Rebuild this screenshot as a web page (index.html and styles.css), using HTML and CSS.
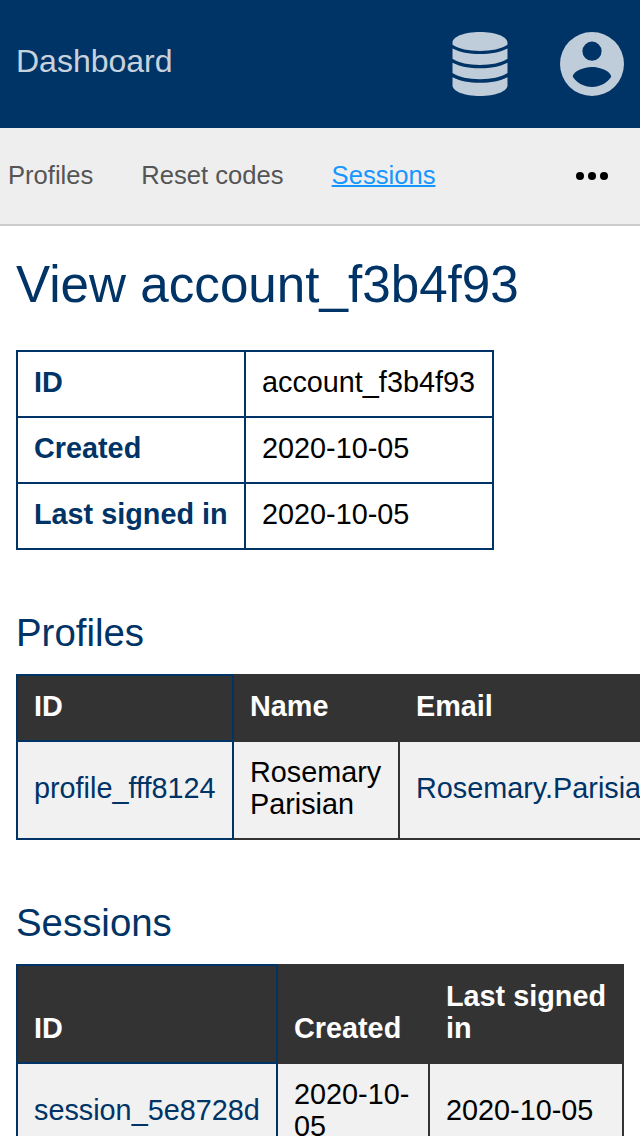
FILE: index.html
```
<!DOCTYPE html>
<html lang="en">
<head>
<meta charset="utf-8">
<title>Dashboard</title>
<link rel="stylesheet" href="styles.css">
</head>
<body>
<header class="topbar">
  <a class="brand">Dashboard</a>
  <div class="actions">
    <svg class="db-icon" viewBox="0 0 56 64"><path d="M28 0C43.5 0 55.5 4.8 55.5 10.5V12.8C49 17 39.500 19 28 19S7 17 .5 12.800V10.500C.5 4.800 12.500 0 28 0ZM.5 16.400C8 20.300 17 21.900 28 21.900S48 20.300 55.500 16.400V26.800C49 31 39.500 33 28 33S7 31 .5 26.800ZM.5 30.800C8 34.700 17 36.300 28 36.300S48 34.700 55.500 30.800V41.100C49 45.300 39.500 47.300 28 47.300S7 45.300 .5 41.100ZM.5 45.200C8 49.100 17 50.700 28 50.700S48 49.100 55.500 45.200V53.500C55.500 59.200 43.500 64 28 64S.5 59.200 .5 53.500Z"/></svg>
    <svg class="user-icon" viewBox="2 2 20 20"><path fill-rule="evenodd" d="M12 2A10 10 0 0 0 2 12A10 10 0 0 0 12 22A10 10 0 0 0 22 12A10 10 0 0 0 12 2ZM12 5A3 3 0 0 1 15 8A3 3 0 0 1 12 11A3 3 0 0 1 9 8A3 3 0 0 1 12 5ZM12 19.2C9.5 19.2 7.29 17.92 6 16C6.03 14 10 12.9 12 12.9C14 12.9 17.97 14 18 16C16.71 17.92 14.5 19.2 12 19.2Z"/></svg>
  </div>
</header>
<nav class="subnav">
  <a>Profiles</a>
  <a>Reset codes</a>
  <a class="active">Sessions</a>
  <svg class="more" viewBox="0 0 32 8"><circle cx="4" cy="4" r="4"/><circle cx="16" cy="4" r="4"/><circle cx="28" cy="4" r="4"/></svg>
</nav>
<main class="content">
  <h1>View account_f3b4f93</h1>
  <table class="details">
    <colgroup><col class="details-key"><col class="details-value"></colgroup>
    <tr><th>ID</th><td>account_f3b4f93</td></tr>
    <tr><th>Created</th><td>2020-10-05</td></tr>
    <tr><th>Last signed in</th><td>2020-10-05</td></tr>
  </table>
  <h2>Profiles</h2>
  <table class="list profiles">
    <colgroup><col class="profile-id"><col class="profile-name"><col class="profile-email"></colgroup>
    <thead><tr><th>ID</th><th>Name</th><th>Email</th></tr></thead>
    <tbody><tr><td><a>profile_fff8124</a></td><td>Rosemary Parisian</td><td><a>Rosemary.Parisian</a></td></tr></tbody>
  </table>
  <h2>Sessions</h2>
  <table class="list sessions">
    <colgroup><col class="session-id"><col class="session-created"><col class="session-last"></colgroup>
    <thead><tr><th>ID</th><th>Created</th><th>Last signed in</th></tr></thead>
    <tbody><tr><td><a>session_5e8728d</a></td><td>2020-10-<wbr>05</td><td>2020-10-05</td></tr></tbody>
  </table>
</main>
</body>
</html>
```
FILE: styles.css
```
* { box-sizing: border-box; }
body {
  margin: 0;
  height: 1136px;
  overflow: hidden;
  background: #fff;
  color: #000;
  font: 28.8px/32px "Liberation Sans", Arial, sans-serif;
}
.topbar {
  display: flex;
  justify-content: space-between;
  align-items: center;
  height: 128px;
  padding: 0 16px;
  background: #003366;
}
.brand {
  color: rgba(255, 255, 255, .8);
  font-size: 32px;
  line-height: 36px;
  padding-bottom: 6px;
}
.actions { display: flex; gap: 52px; fill: #bfccd9; }
.db-icon { width: 56px; height: 64px; }
.user-icon { width: 64px; height: 64px; }
.subnav {
  display: flex;
  align-items: center;
  gap: 48px;
  height: 98px;
  padding: 0 32px 0 8px;
  border-bottom: 2px solid #ccc;
  background: #eee;
  color: #555;
  font-size: 25.6px;
}
.subnav a { padding-bottom: 2px; }
.subnav .active { color: #1597ff; text-decoration: underline; text-decoration-thickness: 2px; }
.more { width: 32px; height: 8px; margin-left: auto; fill: #000; }
.content { padding: 0 16px; }
h1, h2 { margin: 0; color: #003366; font-weight: 400; }
h1 { font-size: 51.2px; line-height: 60px; padding: 29px 0 35px; }
h2 { font-size: 38.4px; line-height: 44px; padding: 61px 0 19px; }
table { border-collapse: collapse; table-layout: fixed; }
th, td { padding: 14px 16px 18px; text-align: left; border: 2px solid #333; }
th { vertical-align: bottom; }
td { vertical-align: middle; }
.details { width: 478px; }
.details th, .details td { border-color: #003366; padding-right: 15px; white-space: nowrap; }
.details th { color: #003366; }
.details-key { width: 228px; }
.details-value { width: 248px; }
.list thead th { background: #333; color: #fff; }
.list td { background: #f1f1f1; }
.list a { color: #003366; }
.list th:first-child, .list td:first-child { border-color: #003366; }
.profiles { width: 704px; }
.profile-id { width: 216px; }
.profile-name { width: 166px; }
.profile-email { width: 320px; }
.sessions { width: 608px; }
.session-id { width: 260px; }
.session-created { width: 152px; }
.session-last { width: 194px; }
```
